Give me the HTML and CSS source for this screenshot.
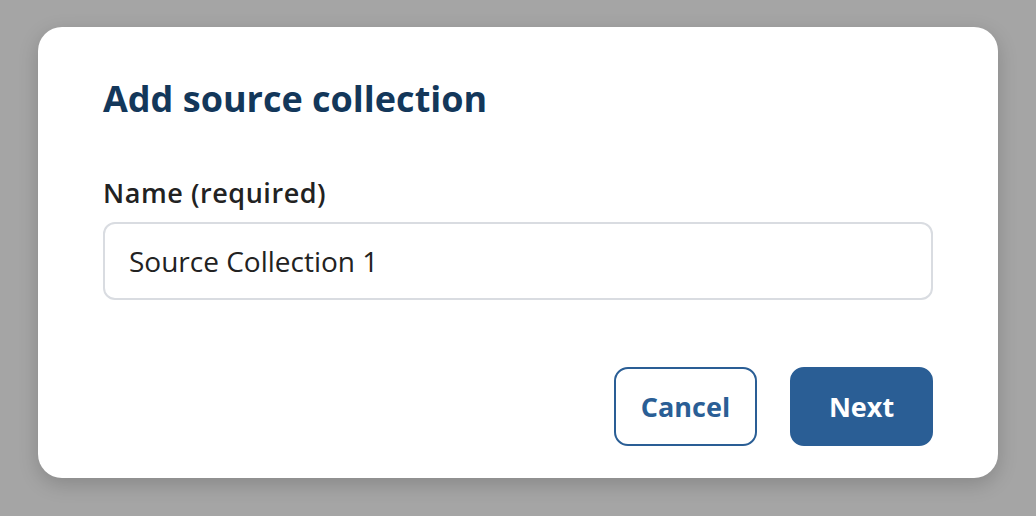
FILE: index.html
```html
<!DOCTYPE html>
<html lang="en">
<head>
<meta charset="utf-8">
<title>Add source collection</title>
<link rel="stylesheet" href="styles.css">
</head>
<body>
<div class="backdrop">
  <div class="dialog">
    <h1 class="title">Add source collection</h1>
    <label class="label" for="name">Name (required)</label>
    <input class="input" id="name" type="text" value="Source Collection 1">
    <div class="actions">
      <button class="btn btn-secondary" type="button">Cancel</button>
      <button class="btn btn-primary" type="button">Next</button>
    </div>
  </div>
</div>
</body>
</html>
```

FILE: styles.css
```css
* { box-sizing: border-box; }
html, body { margin: 0; padding: 0; }
body {
  width: 1036px;
  height: 516px;
  background: #a5a5a5;
  font-family: "Open Sans", "Noto Sans", sans-serif;
  overflow: hidden;
}
.backdrop {
  padding: 27px 38px;
}
.dialog {
  width: 960px;
  height: 451px;
  background: #fff;
  border-radius: 24px;
  box-shadow: 0 6px 20px rgba(0, 0, 0, 0.18);
  padding: 50px 65px 32px;
  display: flex;
  flex-direction: column;
}
.title {
  margin: 0;
  font-size: 36px;
  line-height: 44px;
  font-weight: 700;
  color: #13375a;
}
.label {
  margin-top: 56px;
  font-size: 27px;
  line-height: 32px;
  font-weight: 600;
  letter-spacing: 0.55px;
  color: #222;
}
.input {
  margin-top: 13px;
  height: 78px;
  width: 100%;
  border: 2px solid #d9dce1;
  border-radius: 12px;
  padding: 0 24px;
  font-family: inherit;
  font-size: 28px;
  color: #222;
  outline: none;
}
.actions {
  margin-top: 67px;
  display: flex;
  justify-content: flex-end;
  gap: 33px;
}
.btn {
  height: 79px;
  border-radius: 14px;
  font-family: inherit;
  font-size: 27px;
  font-weight: 700;
  padding: 0;
}
.btn-secondary {
  width: 143px;
  background: #fff;
  border: 2px solid #2a5e95;
  color: #2a5e95;
}
.btn-primary {
  width: 143px;
  background: #2a5e95;
  border: 2px solid #2a5e95;
  color: #fff;
}
```
